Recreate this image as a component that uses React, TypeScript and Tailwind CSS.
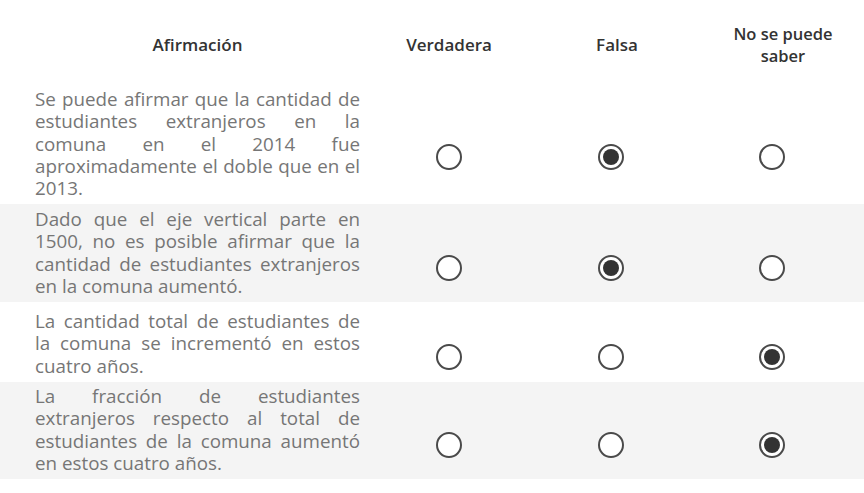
import React from "react";

type Row = { text: string; sel: number; bg: string; h: string; pt: string };

const rows: Row[] = [
  {
    text: "Se puede afirmar que la cantidad de estudiantes extranjeros en la comuna en el 2014 fue aproximadamente el doble que en el 2013.",
    sel: 1,
    bg: "bg-white",
    h: "h-[124px]",
    pt: "pt-[8px]",
  },
  {
    text: "Dado que el eje vertical parte en 1500, no es posible afirmar que la cantidad de estudiantes extranjeros en la comuna aumentó.",
    sel: 1,
    bg: "bg-[#f4f4f4]",
    h: "h-[98px]",
    pt: "pt-[4px]",
  },
  {
    text: "La cantidad total de estudiantes de la comuna se incrementó en estos cuatro años.",
    sel: 2,
    bg: "bg-white",
    h: "h-[80px]",
    pt: "pt-[8px]",
  },
  {
    text: "La fracción de estudiantes extranjeros respecto al total de estudiantes de la comuna aumentó en estos cuatro años.",
    sel: 2,
    bg: "bg-[#f4f4f4]",
    h: "h-[97px]",
    pt: "pt-[3px]",
  },
];

function Radio({ on }: { on: boolean }) {
  return (
    <span className="w-[26px] h-[26px] rounded-full border-2 border-[#4a4a4a] bg-white flex items-center justify-center">
      {on && <span className="w-[16px] h-[16px] rounded-full bg-[#333333]" />}
    </span>
  );
}

export default function App() {
  return (
    <div
      className="w-[864px] h-[493px] bg-white overflow-hidden"
      style={{ fontFamily: '"Open Sans", "Noto Sans", sans-serif' }}
    >
      <div className="grid grid-cols-[368px_162px_162px_160px] h-[80px] pt-[10px] text-[17px] leading-[20px] font-semibold text-[#333333]">
        <div className="flex items-center justify-center pl-[35px] pr-[8px]">Afirmación</div>
        <div className="flex items-center justify-center">Verdadera</div>
        <div className="flex items-center justify-center pl-[12px]">Falsa</div>
        <div className="flex flex-col items-center justify-center pl-[22px] text-center text-[16.5px] leading-[22.5px]">
          <span>No se puede</span>
          <span>saber</span>
        </div>
      </div>
      {rows.map((r, i) => (
        <div key={i} className={`${r.bg} ${r.h} w-full`}>
          <div className="grid grid-cols-[368px_162px_162px_160px] h-full">
            <div className={`pl-[35px] pr-[8px] ${r.pt}`}>
              <p className="text-[18.8px] leading-[22.25px] text-[#767676] text-justify">{r.text}</p>
            </div>
            {[0, 1, 2].map((c) => (
              <div key={c} className="flex items-center justify-center pt-[29px]">
                <Radio on={r.sel === c} />
              </div>
            ))}
          </div>
        </div>
      ))}
    </div>
  );
}
